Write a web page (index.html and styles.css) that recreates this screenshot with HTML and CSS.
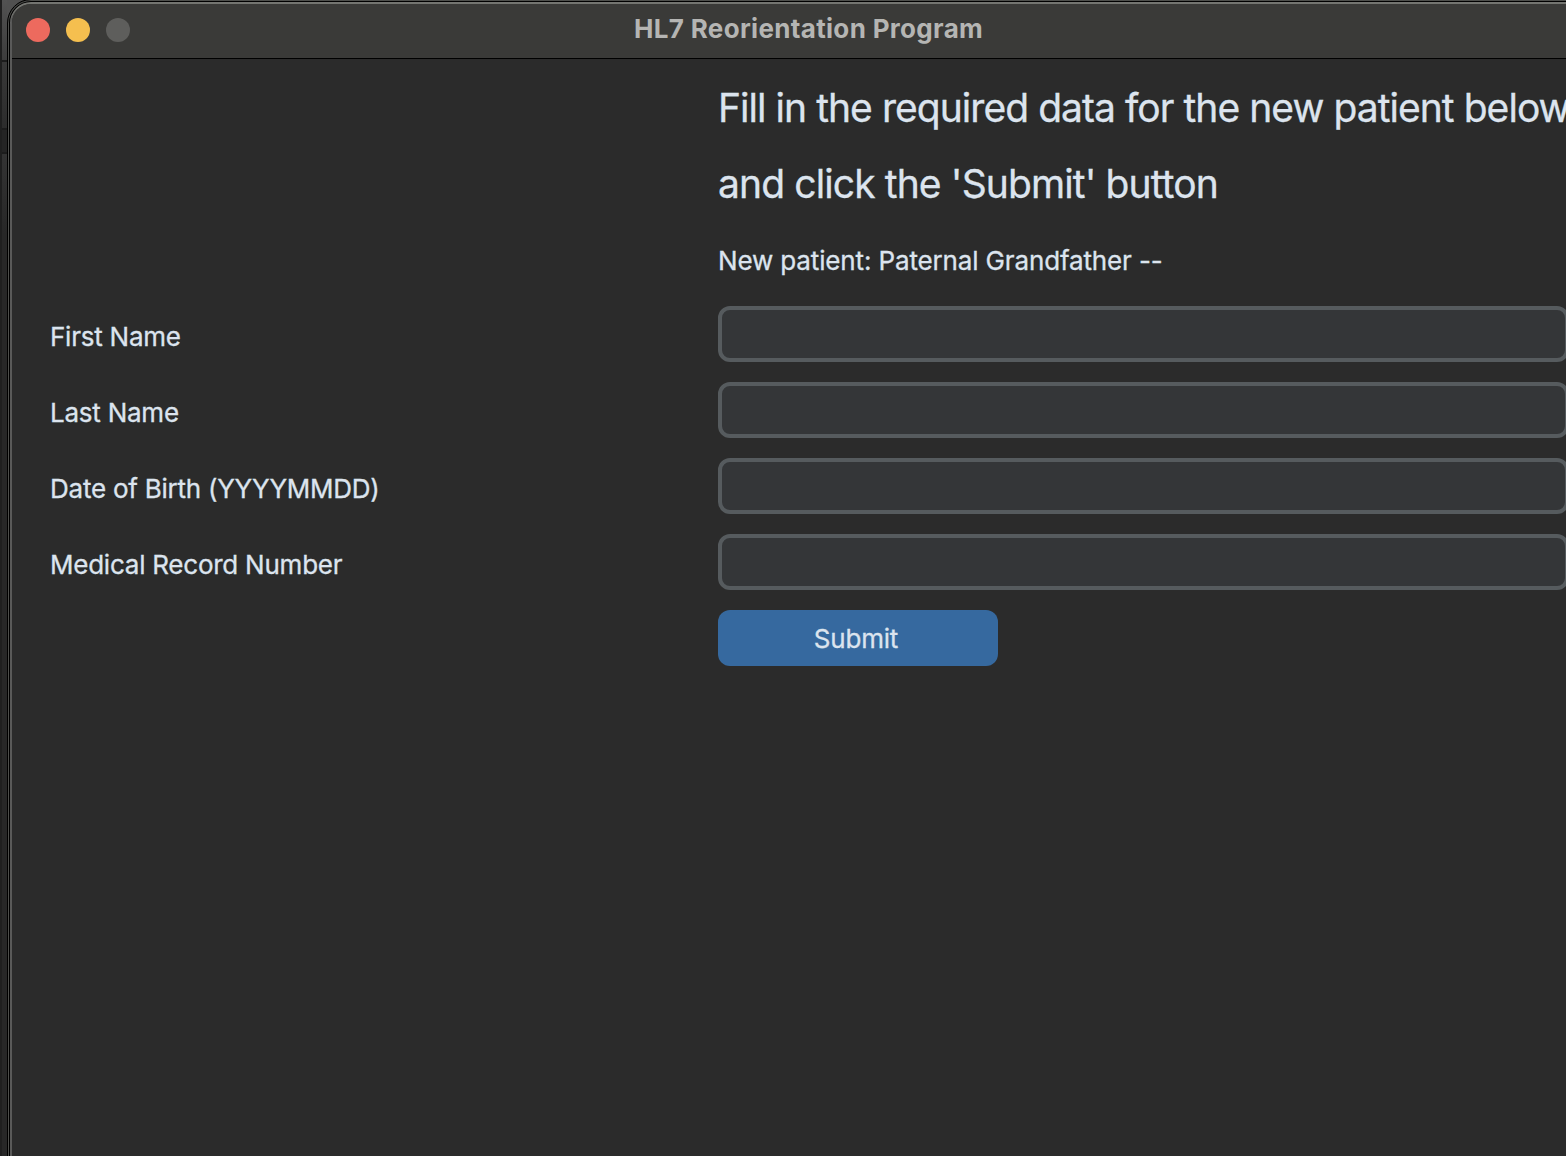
FILE: index.html
```html
<!DOCTYPE html>
<html lang="en">
<head>
<meta charset="utf-8">
<title>HL7 Reorientation Program</title>
<link rel="stylesheet" href="styles.css">
</head>
<body>
<div class="desktop">
  <div class="backdrop">
    <div class="strip toolbar"></div>
    <div class="strip tabs"></div>
    <div class="strip gutter"></div>
    <div class="strip rest"></div>
  </div>
  <div class="window">
    <header class="titlebar">
      <div class="lights"><span class="light close"></span><span class="light minimize"></span><span class="light zoom"></span></div>
      <h1 class="title">HL7 Reorientation Program</h1>
    </header>
    <form class="form">
      <p class="heading first">Fill in the required data for the new patient below</p>
      <p class="heading">and click the 'Submit' button</p>
      <p class="patient">New patient: Paternal Grandfather --</p>
      <label class="label" for="first">First Name</label><input class="field" id="first" type="text">
      <label class="label" for="last">Last Name</label><input class="field" id="last" type="text">
      <label class="label" for="dob">Date of Birth (YYYYMMDD)</label><input class="field" id="dob" type="text">
      <label class="label" for="mrn">Medical Record Number</label><input class="field" id="mrn" type="text">
      <button class="submit" type="button">Submit</button>
    </form>
  </div>
</div>
</body>
</html>
```
FILE: styles.css
```css
* { box-sizing: border-box; }

body {
  margin: 0;
  overflow: hidden;
  background: #222;
  font-family: Inter, "Liberation Sans", sans-serif;
  color: #dce4ee;
}

.desktop {
  display: grid;
  grid-template-columns: 7px 1fr;
  width: 1566px;
  height: 1156px;
  overflow: hidden;
  background: #505050;
}

.backdrop {
  display: flex;
  flex-direction: column;
  border-left: 2px solid #1f1f1f;
}
.strip { border-bottom: 2px solid #1c1c1c; }
.toolbar { height: 62px; background: linear-gradient(#525252, #3c3c3c); }
.tabs { height: 68px; background: linear-gradient(#383838, #2c2c2c); }
.gutter { height: 24px; background: #242424; }
.rest { flex: 1; border: 0; background: linear-gradient(#333, #272727 80px); }

/* The window frame is four thin rings: black, grey, black, highlight. */
.window {
  width: 1600px;
  height: 1180px;
  margin-top: -1px;
  padding: 4px;
  border: 1px solid #000;
  border-radius: 24px 0 0 0;
  background: #2b2b2b;
  box-shadow: inset 0 0 0 1px #4e4f4c, inset 0 0 0 2px #000, inset 0 2px 0 2px #747571, inset 0 0 0 4px #5a5a59;
}

.titlebar {
  display: flex;
  align-items: center;
  height: 55px;
  padding: 0 0 2px 14px;
  background: #3a3a38;
  border-bottom: 1px solid #000;
  border-radius: 19px 0 0 0;
}
.lights { display: flex; gap: 16px; }
.light { width: 24px; height: 24px; border-radius: 50%; }
.close { background: #ed6a5e; }
.minimize { background: #f5bf4f; }
.zoom { background: #5e5e5c; }
.title { margin: 0 0 0 504px; padding-bottom: 3px; font-size: 26px; font-weight: 700; letter-spacing: 0.33px; color: #b5b5b3; white-space: nowrap; }

.form {
  display: grid;
  grid-template-columns: 668px 851px;
  grid-auto-rows: 56px;
  row-gap: 20px;
  padding: 19px 0 0 38px;
}
.heading, .patient, .submit { grid-column: 2; }
.heading, .patient { margin: 0; white-space: nowrap; }
.heading { font-size: 39px; line-height: 60px; letter-spacing: -0.88px; }
.first { letter-spacing: -0.95px; }
.patient, .label { font-size: 26px; line-height: 62px; letter-spacing: -0.24px; }
.patient { letter-spacing: -0.14px; }
.field { border: 4px solid #565b5e; border-radius: 12px; background: #343638; }
.submit { width: 280px; padding: 0 4px 0 0; border: 0; border-radius: 12px; background: #36699f; color: #dce4ee; font: 26px Inter, "Liberation Sans", sans-serif; letter-spacing: -0.2px; }

.heading, .patient, .label, .submit { -webkit-text-stroke: 0.3px #dce4ee; }
```
